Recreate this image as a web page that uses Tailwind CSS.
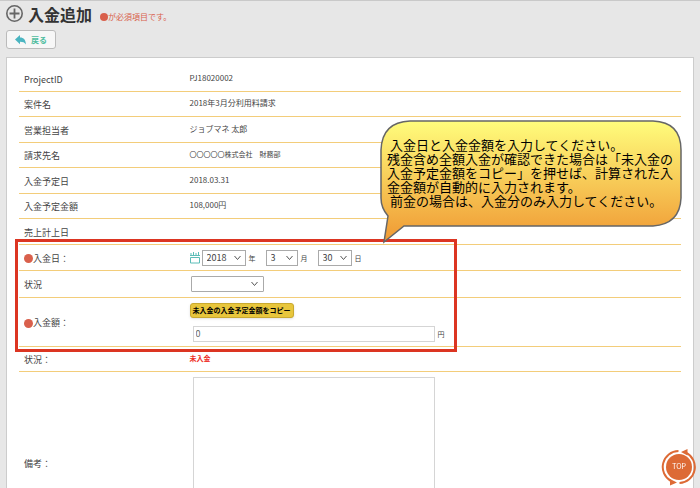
<!DOCTYPE html>
<html lang="ja">
<head>
  <meta charset="UTF-8" />
  <meta name="viewport" content="width=device-width, initial-scale=1.0" />
  <title>入金追加</title>
  <script src="https://cdn.jsdelivr.net/npm/@tailwindcss/browser@4"></script>
</head>
<body class="bg-[#e7e7e7] text-[#444] font-['Noto_Sans_CJK_JP',sans-serif] border-t border-[#c9c9c9] h-screen overflow-hidden">

  <header class="px-[6px] pt-px">
    <div class="flex items-center h-[24px]">
      <svg class="w-[18px] h-[18px]" viewBox="0 0 18 18" fill="none" stroke="#666">
        <circle cx="8.500" cy="8.500" r="7.700" stroke-width="1.600" />
        <path d="M8.500 3.500v10M3.500 8.500h10" stroke-width="1.800" />
      </svg>
      <h1 class="ml-[4px] text-[16px] leading-[24px] font-bold text-[#333]">入金追加</h1>
      <p class="ml-[8px] mt-[6px] flex items-center text-[8px] leading-[10px] text-[#d9604c]">
        <span class="w-[8px] h-[8px] rounded-full bg-[#d9604c]"></span>が必須項目です。
      </p>
    </div>
    <button type="button" class="mt-[4px] flex items-center justify-center gap-[5px] w-[50px] h-[19px] rounded-[3px] border border-[#bbb] bg-[#f7f7f7] text-[8px] leading-[10px] font-bold text-[#4fbda0]">
      <svg class="w-[11px] h-[10px]" viewBox="0 0 11 10" fill="#4bb5c1">
        <path d="M0 4.500 5 0v2.500c3.800 0 5.800 2.300 5.900 7C9.600 7.400 8 6.700 5 6.700V9.200z" />
      </svg>
      戻る
    </button>
  </header>

  <main class="mt-[8px] mx-[6px] bg-white border border-[#ccc] pt-[8px] px-[12px]">
    <form class="relative">
      <table class="w-full table-fixed border-separate border-spacing-0 text-[9px] leading-[12px] [&_th]:w-1/4 [&_th]:p-0 [&_th]:pl-[5px] [&_th]:pt-[2px] [&_th]:text-left [&_th]:font-normal [&_td]:p-0 [&_td]:pl-[5px] [&_th]:border-b [&_td]:border-b [&_th]:border-[#f3cd7a] [&_td]:border-[#f3cd7a]">
        <tbody>
          <tr class="h-[26px]"><th>ProjectID</th><td><p class="pb-[2px] text-[8px]">PJ18020002</p></td></tr>
          <tr class="h-[25px]"><th>案件名</th><td><p class="pb-[2px] text-[8px]">2018年3月分利用料請求</p></td></tr>
          <tr class="h-[26px]"><th>営業担当者</th><td><p class="pb-[2px] text-[8px]">ジョブマネ 太郎</p></td></tr>
          <tr class="h-[25px]"><th>請求先名</th><td><p class="pb-[2px] text-[7px]">〇〇〇〇〇株式会社　財務部</p></td></tr>
          <tr class="h-[26px]"><th>入金予定日</th><td><p class="pb-[2px] text-[8px]">2018.03.31</p></td></tr>
          <tr class="h-[25px]"><th>入金予定金額</th><td><p class="pb-[2px] text-[8px]">108,000円</p></td></tr>
          <tr class="h-[26px]"><th>売上計上日</th><td></td></tr>
          <tr class="h-[26px]">
            <th>
              <label for="year" class="flex items-center"><span class="w-[9px] h-[9px] rounded-full bg-[#d9604c]"></span>入金日：</label>
            </th>
            <td>
              <div class="flex items-center text-[7px]">
                <svg class="w-[10px] h-[12px] mr-[2px]" viewBox="0 0 10 12" fill="none" stroke="#5bbdb8">
                  <path d="M.5 5.500h9v5.500h-9z" />
                  <path d="M0 3.500h10M1 1v2M3.500 0v3M6 1v2M8.500 0v3" />
                </svg>
                <span class="relative">
                  <select id="year" class="block appearance-none w-[44px] h-[16px] pl-[4px] border border-[#aaa] bg-white text-[9px] leading-[12px]"><option>2018</option></select>
                  <svg class="absolute right-[5px] top-[5px] w-[7px] h-[6px] pointer-events-none" viewBox="0 0 7 6" fill="none" stroke="#555"><path d="M.5 1l3 3.500 3-3.500" /></svg>
                </span>
                <label for="year" class="w-[20px] pl-[3px]">年</label>
                <span class="relative">
                  <select id="month" class="block appearance-none w-[32px] h-[16px] pl-[4px] border border-[#aaa] bg-white text-[9px] leading-[12px]"><option>3</option></select>
                  <svg class="absolute right-[5px] top-[5px] w-[7px] h-[6px] pointer-events-none" viewBox="0 0 7 6" fill="none" stroke="#555"><path d="M.5 1l3 3.500 3-3.500" /></svg>
                </span>
                <label for="month" class="w-[20px] pl-[3px]">月</label>
                <span class="relative">
                  <select id="day" class="block appearance-none w-[34px] h-[16px] pl-[4px] border border-[#aaa] bg-white text-[9px] leading-[12px]"><option>30</option></select>
                  <svg class="absolute right-[5px] top-[5px] w-[7px] h-[6px] pointer-events-none" viewBox="0 0 7 6" fill="none" stroke="#555"><path d="M.5 1l3 3.500 3-3.500" /></svg>
                </span>
                <label for="day" class="pl-[3px]">日</label>
              </div>
            </td>
          </tr>
          <tr class="h-[27px]">
            <th><label for="status">状況</label></th>
            <td>
              <span class="relative block w-[73px] ml-px">
                <select id="status" class="block appearance-none w-full h-[16px] border border-[#aaa] rounded-[1px] bg-white text-[9px] leading-[12px]"><option></option></select>
                <svg class="absolute right-[6px] top-[5px] w-[7px] h-[6px] pointer-events-none" viewBox="0 0 7 6" fill="none" stroke="#555"><path d="M.5 1l3 3.500 3-3.500" /></svg>
              </span>
            </td>
          </tr>
          <tr class="h-[49px]">
            <th>
              <label for="amount" class="flex items-center"><span class="w-[9px] h-[9px] rounded-full bg-[#d9604c]"></span>入金額：</label>
            </th>
            <td>
              <button type="button" class="block w-[104px] h-[15px] rounded-[3px] bg-[#e8c63c] border border-[#c9a92f] shadow-sm whitespace-nowrap text-[7px] leading-[12px] font-bold text-black">未入金の入金予定金額をコピー</button>
              <div class="mt-[8px] ml-[3px] flex items-center gap-[3px] text-[7px]">
                <input id="amount" type="text" value="0" class="block w-[242px] h-[16px] px-[2px] border border-[#d5d5d5] bg-white text-[9px] leading-[12px] text-[#666]" />
                <span>円</span>
              </div>
            </td>
          </tr>
          <tr class="h-[25px]"><th>状況：</th><td><p class="pb-[2px] text-[7px] font-bold text-[#ee3028]">未入金</p></td></tr>
          <tr class="h-[182px]">
            <th><label for="note">備考：</label></th>
            <td>
              <textarea id="note" class="block w-[242px] h-[172px] ml-[3px] border border-[#d5d5d5] bg-white resize-none"></textarea>
            </td>
          </tr>
        </tbody>
      </table>

      <!-- highlight frame -->
      <div class="absolute left-[-4px] top-[173px] w-[442px] h-[113px] border-3 border-[#dc3522] pointer-events-none"></div>

      <!-- callout -->
      <div class="absolute right-[-2px] top-[54px] w-[303px] h-[124px]">
        <svg class="absolute inset-0 w-full h-full" viewBox="0 0 303 124">
          <defs>
            <linearGradient id="balloon" x1="0" y1="0" x2="0" y2="1">
              <stop offset="0" stop-color="#fffd7c" />
              <stop offset="0.900" stop-color="#f1a23a" />
              <stop offset="1" stop-color="#ef9c36" />
            </linearGradient>
          </defs>
          <path d="M30 1H273Q301 2 301 30V78Q300 104 273 106H24L4 122 8 96Q1 88 1 78V30Q2 2 30 1Z" fill="url(#balloon)" stroke="#666" stroke-width="1.500" />
        </svg>
        <p class="relative pt-[18px] pl-[7px] text-[13px] leading-[14px] text-black whitespace-pre"> 入金日と入金金額を入力してください。
残金含め全額入金が確認できた場合は「未入金の
入金予定金額をコピー」を押せば、計算された入
金金額が自動的に入力されます。
 前金の場合は、入金分のみ入力してください。</p>
      </div>
    </form>
  </main>

  <a href="#" class="fixed right-[3px] bottom-[2px] w-[36px] h-[38px]">
    <svg class="w-full h-full" viewBox="0 0 36 38" fill="none" stroke="#dd6a35" stroke-width="2">
      <circle cx="18" cy="19" r="13" fill="#dd6a35" stroke="none" />
      <path d="M17.500 3A16 16 0 0 0 10 33M18.500 35A16 16 0 0 0 25 4.700" />
      <path d="M20 4 26.500 1v6.500zM16 34.500 9 31v6.500z" fill="#dd6a35" stroke="none" />
    </svg>
    <span class="absolute inset-0 flex items-center justify-center font-['Inter',sans-serif] text-[7px] leading-[8px] text-white">TOP</span>
  </a>

</body>
</html>
